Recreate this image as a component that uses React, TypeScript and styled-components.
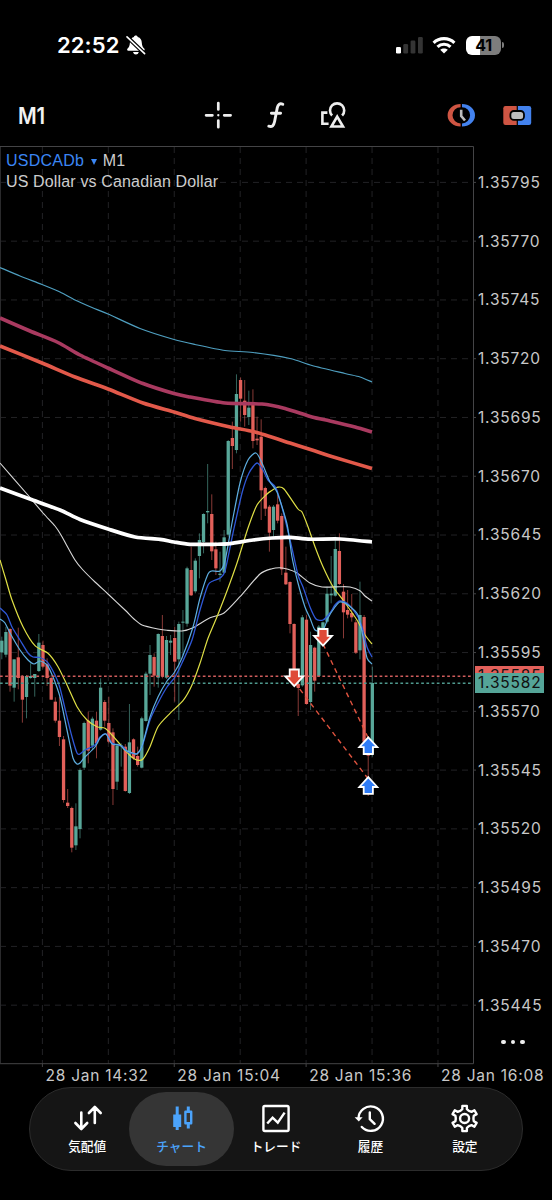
import React from "react";
import styled, { createGlobalStyle } from "styled-components";

const GlobalStyle = createGlobalStyle`
  body { margin: 0; background: #000; }
  * { box-sizing: border-box; }
`;

const sans = '"Inter", "Noto Sans CJK JP", sans-serif';

const Screen = styled.div`
  width: 552px;
  height: 1200px;
  background: #000;
  color: #fff;
  display: flex;
  flex-direction: column;
  overflow: hidden;
  font-family: ${sans};
`;

const StatusBar = styled.header`
  height: 90px;
  flex: none;
  display: flex;
  align-items: center;
  padding: 0 48px 0 57px;
`;

const Time = styled.span`
  font-size: 22px;
  font-weight: 600;
  line-height: 24px;
  width: 69px;
  letter-spacing: 0.1px;
  white-space: nowrap;
`;

const StatusIcons = styled.div`
  margin-left: auto;
  display: flex;
  align-items: center;
`;

const WifiIcon = styled.svg`
  margin-left: 9px;
`;

const Battery = styled.div`
  width: 35px;
  height: 19px;
  margin-left: 10px;
  border-radius: 6px;
  background: linear-gradient(90deg, #fff 41%, #7d7d7d 41%);
  color: #000;
  font-size: 16px;
  font-weight: 700;
  line-height: 19px;
  text-align: center;
  letter-spacing: -0.3px;
`;

const BatteryTip = styled.div`
  width: 2px;
  height: 6px;
  margin-left: 1px;
  border-radius: 0 2px 2px 0;
  background: #7d7d7d;
`;

const Toolbar = styled.nav`
  height: 56px;
  flex: none;
  display: flex;
  align-items: center;
  padding: 0 19px 6px 18px;
`;

const Timeframe = styled.span`
  font-size: 22.5px;
  font-weight: 600;
  letter-spacing: -0.2px;
  width: 184px;
  color: #f2f2f2;
  transform: scaleX(0.9);
  transform-origin: left;
`;

const ToolButton = styled.button<{ $gap?: number }>`
  width: 32px;
  height: 32px;
  padding: 0;
  border: 0;
  background: none;
  display: block;
  margin-left: ${(p) => p.$gap ?? 0}px;
  svg { display: block; }
`;

const ChartArea = styled.main`
  height: 918px;
  flex: none;
  display: flex;
  position: relative;
`;

const Plot = styled.svg`
  width: 477px;
  height: 922px;
  flex: none;
  display: block;
`;

const SymbolInfo = styled.div`
  position: absolute;
  left: 6px;
  top: 5px;
  font-family: "Liberation Sans", Arial, sans-serif;
  font-size: 16px;
  letter-spacing: 0.15px;
  line-height: 20.5px;
  color: #cdcdcd;
  white-space: nowrap;
`;

const SymbolRow = styled.div`
  display: flex;
  align-items: center;
`;

const SymbolName = styled.span`
  color: #3b86f4;
  letter-spacing: 0.25px;
`;

const Caret = styled.span`
  width: 0;
  height: 0;
  margin: 2px 6px 0 6.5px;
  border: 3.2px solid transparent;
  border-top: 6px solid #3b86f4;
  border-bottom: 0;
`;

const PriceAxis = styled.div`
  padding: 7.9px 0 0 1px;
  display: flex;
  flex-direction: column;
`;

const axisText = `
  font-family: ${sans};
  font-size: 15.5px;
  letter-spacing: 0.8px;
  white-space: nowrap;
`;

const PriceLabel = styled.span`
  ${axisText}
  height: 58.77px;
  line-height: 58.77px;
  color: #c8c8c8;
`;

const PriceTag = styled.div<{ $tone: string; $top: number }>`
  ${axisText}
  position: absolute;
  left: 475px;
  top: ${(p) => p.$top}px;
  width: 69px;
  height: 20px;
  line-height: 20px;
  padding-left: 3px;
  color: #111;
  background: ${(p) => p.$tone};
`;

const MoreDots = styled.div`
  position: absolute;
  left: 501px;
  top: 893.5px;
  display: flex;
  gap: 4.8px;
`;

const Dot = styled.i`
  width: 4.8px;
  height: 4.8px;
  border-radius: 50%;
  background: #eee;
`;

const TimeAxis = styled.div`
  height: 23px;
  flex: none;
  padding-left: 45.5px;
  display: flex;
`;

const TimeLabel = styled.span`
  ${axisText}
  letter-spacing: 0.75px;
  width: 131.87px;
  flex: none;
  line-height: 23px;
  color: #c8c8c8;
`;

const TabBar = styled.nav`
  width: 494px;
  height: 84px;
  flex: none;
  margin-left: 29px;
  padding: 4px 10px 4px 10px;
  display: flex;
  border: 1px solid #2c2c2c;
  border-radius: 42px;
  background: #151515;
`;

const Tab = styled.button<{ $active?: boolean }>`
  flex: 1 1 0;
  height: 74px;
  margin: 0 ${(p) => (p.$active ? "-5.5px" : "0")};
  ${(p) => (p.$active ? "flex: 0 0 105.5px;" : "")}
  padding: 11px 0 0;
  border: 0;
  border-radius: 37px;
  background: ${(p) => (p.$active ? "#353535" : "none")};
  color: ${(p) => (p.$active ? "#4ba3fb" : "#fff")};
  display: flex;
  flex-direction: column;
  align-items: center;
  font-family: ${sans};
  font-size: 12.7px;
  font-weight: 500;
  line-height: 18px;
  gap: 5px;
  white-space: nowrap;
  svg { display: block; flex: none; overflow: visible; }
`;

const UP = "#58a799";
const DOWN = "#e2605a";
const STEP = 4.117;
const X0 = 1.8;

type Candle = [number, number, number, number, number];

const fromBase = (base: number, rows: [number, number, number, number, number][]): Candle[] =>
  rows.map(([up, a, b, c, d]) => [up, base + a / 3, base + b / 3, base + c / 3, base + d / 3]);

/* direction, body top, body bottom, wick top, wick bottom (thirds of a pixel from a base row) */
const candles: Candle[] = [
  ...fromBase(600, [
    [1, 122, 157, 110, 178], [1, 96, 164, 80, 172], [0, 87, 257, 85, 275], [1, 178, 263, 178, 305],
    [0, 172, 234, 83, 268], [0, 228, 299, 225, 368], [1, 228, 291, 225, 355], [1, 228, 234, 190, 236],
    [1, 222, 234, 222, 290], [1, 128, 213, 102, 216], [0, 135, 200, 122, 205], [0, 193, 234, 175, 258],
    [0, 234, 299, 225, 299], [0, 305, 362, 292, 368], [0, 362, 411, 290, 438], [0, 418, 600, 408, 608],
    [0, 608, 618, 567, 624], [0, 624, 743, 620, 757], [1, 679, 736, 610, 750], [1, 510, 687, 505, 715],
    [1, 369, 503, 365, 510], [0, 362, 452, 335, 490], [1, 356, 437, 350, 450], [0, 362, 430, 335, 475],
    [1, 263, 389, 235, 392], [0, 306, 362, 300, 380], [0, 369, 425, 290, 430], [0, 397, 567, 385, 615],
    [1, 437, 545, 430, 570], [1, 436, 439, 430, 500], [0, 440, 573, 432, 575], [1, 427, 579, 312, 582],
    [0, 418, 475, 415, 480], [0, 468, 495, 440, 500],
  ]),
  ...fromBase(560, [
    [1, 475, 623, 470, 625], [1, 341, 483, 335, 485], [1, 285, 341, 255, 405], [0, 291, 347, 280, 380],
    [1, 222, 353, 220, 383], [0, 228, 349, 165, 355], [1, 240, 353, 228, 357], [1, 242, 248, 225, 285],
    [0, 234, 305, 200, 425], [1, 192, 298, 185, 480], [1, 185, 188, 150, 285],
  ]),
  ...fromBase(360, [
    [1, 625, 791, 620, 800], [0, 630, 706, 560, 708], [1, 602, 694, 595, 700], [1, 540, 588, 520, 655],
    [1, 462, 546, 460, 580], [1, 453, 457, 312, 490], [0, 462, 574, 403, 600], [0, 568, 625, 545, 645],
    [1, 641, 645, 575, 665], [1, 532, 638, 510, 640], [1, 243, 524, 240, 530], [0, 234, 258, 185, 327],
    [1, 102, 270, 43, 280], [0, 60, 116, 52, 185], [0, 122, 165, 60, 200], [1, 143, 171, 92, 195],
    [0, 135, 243, 88, 265], [0, 236, 241, 170, 255], [0, 230, 391, 178, 480], [0, 384, 446, 380, 468],
    [0, 440, 518, 435, 575], [1, 440, 510, 435, 530], [0, 433, 482, 405, 490],
  ]),
  ...fromBase(480, [
    [0, 108, 268, 100, 285], [0, 278, 313, 200, 315], [0, 306, 432, 304, 460], [0, 432, 600, 430, 618],
    [0, 612, 624, 580, 708], [1, 412, 616, 405, 620], [0, 419, 672, 405, 674], [1, 495, 666, 455, 690],
    [0, 503, 602, 500, 635], [1, 440, 588, 435, 590], [1, 427, 445, 425, 460], [1, 341, 425, 320, 430],
    [1, 341, 346, 228, 370], [1, 207, 347, 170, 350], [0, 213, 312, 160, 315], [0, 335, 397, 312, 475],
    [0, 390, 404, 330, 415], [0, 399, 412, 342, 425], [0, 427, 518, 420, 522], [1, 405, 511, 305, 538],
    [0, 411, 785, 405, 800], [0, 785, 827, 770, 948], [1, 609, 822, 560, 830],
  ]),
];

/* Cardinal spline through the listed points */
const smooth = (flat: number[]) => {
  const p: [number, number][] = [];
  for (let i = 0; i < flat.length; i += 2) p.push([flat[i], flat[i + 1]]);
  let d = `M${p[0][0]} ${p[0][1]}`;
  for (let i = 0; i < p.length - 1; i++) {
    const a = p[Math.max(0, i - 1)], b = p[i], c = p[i + 1], e = p[Math.min(p.length - 1, i + 2)];
    const k = 8;
    d += `C${b[0] + (c[0] - a[0]) / k} ${b[1] + (c[1] - a[1]) / k} ${c[0] - (e[0] - b[0]) / k} ${c[1] - (e[1] - b[1]) / k} ${c[0]} ${c[1]}`;
  }
  return d;
};

const averages: { color: string; width: number; pts: number[] }[] = [
  { color: "#d8d8d8", width: 1.1, pts: [0, 463, 27, 494, 43, 513, 55, 526, 61, 535, 75, 560, 83, 570, 95, 582, 108, 594, 125, 610, 134, 619, 142, 625, 158, 629, 167, 630.3, 182, 631, 193, 627.7, 210, 617.7, 224, 613, 240, 596.7, 260, 574, 272, 568.7, 280, 567.7, 288, 569.3, 297, 573, 310, 583, 322, 587, 340, 586.7, 350, 587, 360, 590.7, 365, 596, 372, 601] },
  { color: "#dfdf45", width: 1.2, pts: [0, 560, 6, 580, 12, 600, 23, 626.7, 35, 645.7, 48, 653.3, 58, 666.7, 67, 685, 77, 706.7, 87, 720, 97, 726.7, 105, 728.3, 112, 735, 125, 750, 132, 757.3, 138, 760.3, 143, 759, 150, 746.7, 158, 726.7, 170, 713.3, 183, 700.7, 192, 685, 200, 663.3, 208, 638.3, 217, 616.7, 227, 591, 237, 563, 248, 528, 257, 505, 267, 494, 271, 491, 278, 487.2, 284, 489, 298, 509, 302, 512, 308, 526.7, 315, 546.7, 323, 566.7, 333, 586.7, 343, 600, 357, 620, 365, 635, 372, 644] },
  { color: "#2f58d8", width: 1.3, pts: [0, 608, 7, 615, 12, 627, 20, 640, 28, 653, 33, 657, 40, 657.5, 47, 661.7, 55, 675, 60, 688, 67, 717, 72, 737, 77, 753, 80, 754, 85, 750, 95, 745, 100, 737, 106, 734, 112, 743, 122, 746, 128, 752, 137, 753.5, 142, 746.7, 150, 720, 158, 703, 167, 687, 175, 677, 182, 663, 192, 640, 200, 610, 208, 585, 213, 581, 220, 578, 225, 571, 233, 533, 242, 493, 249, 473, 257, 463, 263, 470, 268, 480, 276, 488, 283, 511, 291, 544, 298, 575, 303, 587, 310, 607, 316, 619, 323, 620, 330, 613, 335, 605, 340, 601, 348, 604, 358, 617, 362, 627, 367, 647, 372, 657] },
  { color: "#5eaee0", width: 1.2, pts: [0, 619, 5, 623, 10, 633, 20, 650, 28, 660, 34, 664, 40, 661, 47, 665, 53, 677, 60, 697, 67, 730, 73, 758, 77, 764, 80, 763, 85, 757, 95, 747, 100, 738, 106, 734, 112, 744, 120, 745, 125, 750, 133, 753, 137, 754, 142, 746, 150, 717, 158, 697, 167, 681, 174, 673, 182, 658, 193, 627, 200, 598, 208, 574, 212, 571, 220, 571, 225, 561, 232, 523, 240, 483, 248, 460, 256, 453, 262, 463, 270, 482, 277, 492, 287, 524, 292, 557, 298, 583, 305, 607, 310, 618, 315, 630, 323, 630, 328, 618, 335, 607, 340, 602, 348, 605, 358, 615, 363, 637, 367, 658, 372, 664] },
  { color: "#ffffff", width: 3.7, pts: [0, 488, 30, 499, 60, 510, 80, 519.5, 108, 529, 135, 537, 160, 539.3, 174, 542, 190, 544.3, 215, 544.3, 230, 543.7, 253, 540, 272, 538, 290, 537.4, 310, 539.2, 340, 539, 372, 542] },
  { color: "#e2594a", width: 3.6, pts: [0, 346, 42, 363, 75, 377, 108, 389, 143, 403, 174, 412, 195, 418.5, 230, 427, 255, 432, 290, 443, 312, 450, 330, 456, 372, 468.5] },
  { color: "#a93a60", width: 3.6, pts: [0, 318, 30, 331, 58, 342.5, 80, 355, 108, 368, 143, 383.5, 174, 393.5, 190, 397, 225, 403, 262, 404, 285, 408.5, 312, 417, 330, 421, 355, 427, 372, 432] },
  { color: "#4f9fc0", width: 1.2, pts: [0, 267.5, 20, 276, 42, 284.5, 60, 292, 75, 300, 92, 307.5, 108, 314, 140, 328.5, 174, 339.5, 195, 344.5, 225, 350.5, 253, 352.5, 290, 358.5, 312, 365.5, 345, 373.5, 360, 377, 372, 382] },
];

const gridX = [0, 1, 2, 3, 4, 5, 6].map((i) => 42.4 + 65.93 * i);
const gridY = Array.from({ length: 15 }, (_, i) => 182.4 + 58.77 * i);

const ARROW = "M0 -8.6 L9 1.2 H4.6 V8 H-4.6 V1.2 H-9 Z";

const Marker = ({ x, y, sell }: { x: number; y: number; sell?: boolean }) => (
  <path
    d={ARROW}
    transform={`translate(${x} ${y})${sell ? " scale(1 -1)" : ""}`}
    fill={sell ? "#df4a38" : "#2f7cf6"}
    stroke="#fff"
    strokeWidth="1.8"
  />
);

const Chart = () => (
  <Plot viewBox="0 146 477 922">
    <g stroke="#222225" strokeWidth="1" strokeDasharray="6 5">
      {gridY.map((y) => <line key={y} x1="0" x2="473" y1={y} y2={y} />)}
      {gridX.map((x) => <line key={x} x1={x} x2={x} y1="147" y2="1064" />)}
    </g>
    <path d="M0 146.5 H473.5 V1063.7 H0" fill="none" stroke="#444446" />
    <path d="M0.5 147 V1063" stroke="#2a2a2c" />
    <g stroke="#444446">
      {gridY.map((y) => <line key={y} x1="473" x2="476" y1={y} y2={y} />)}
      {[0, 2, 4, 6].map((i) => <line key={i} x1={gridX[i]} x2={gridX[i]} y1="1064" y2="1067" />)}
    </g>
    {candles.map(([up, a, b, c, d], i) => {
      const x = X0 + STEP * i;
      const color = up ? UP : DOWN;
      return (
        <g key={i}>
          <line x1={x} x2={x} y1={c} y2={d} stroke={color} strokeWidth="1" opacity="0.6" />
          <rect x={x - 1.65} y={a} width="3.3" height={b - a} fill={color} />
        </g>
      );
    })}
    {averages.map((l, i) => (
      <path key={i} d={smooth(l.pts)} fill="none" stroke={l.color} strokeWidth={l.width} />
    ))}
    <line x1="0" x2="473" y1="676.3" y2="676.3" stroke="#d05d5c" strokeWidth="1.6" strokeDasharray="2.7 2.5" />
    <line x1="0" x2="473" y1="683.2" y2="683.2" stroke="#4f998e" strokeWidth="1.6" strokeDasharray="2.7 2.5" />
    <g stroke="#e0533f" strokeWidth="1.4" strokeDasharray="5 4">
      <line x1="323" y1="644" x2="368.3" y2="738" />
      <line x1="294.3" y1="682" x2="368.3" y2="779" />
    </g>
    <Marker x={323} y={637} sell />
    <Marker x={294.3} y={677.5} sell />
    <Marker x={368.3} y={746} />
    <Marker x={368.3} y={785.8} />
  </Plot>
);

const prices = Array.from({ length: 15 }, (_, i) => (1.35795 - i * 0.00025).toFixed(5));

const gearPath = () => {
  const pts: string[] = [];
  for (let i = 0; i < 6; i++) {
    const a = i * 60 - 90;
    [[-25, 8.9], [-14, 9.6], [-10, 12.8], [10, 12.8], [14, 9.6], [25, 8.9]].forEach(([o, r]) => {
      const t = ((a + o) * Math.PI) / 180;
      pts.push(`${(14 + r * Math.cos(t)).toFixed(2)} ${(14 + r * Math.sin(t)).toFixed(2)}`);
    });
  }
  return `M${pts.join("L")}Z`;
};

const TabIcon = ({ children }: { children: React.ReactNode }) => (
  <svg width="28" height="30" viewBox="0 0 28 30" fill="none" stroke="currentColor" strokeWidth="2.4" strokeLinecap="round" strokeLinejoin="round">
    {children}
  </svg>
);

export default function App() {
  return (
    <>
      <GlobalStyle />
      <Screen>
        <StatusBar>
          <Time>22:52</Time>
          <svg width="20" height="20" viewBox="0 0 20 20">
            <path d="M9.8 0.6C10.8 0.6 11.5 1.2 11.7 2C14.6 2.8 15.7 5 15.8 7.7C15.9 10.9 17 12.3 18.4 13.8C19 14.7 18.6 15.7 17.6 15.7H2.2C1.2 15.7 0.8 14.7 1.4 13.8C2.8 12.3 3.8 10.9 3.9 7.7C4 5 5.1 2.8 7.9 2C8.1 1.2 8.8 0.6 9.8 0.6ZM7 17H12.8C12.3 18.7 11.3 19.5 9.9 19.5S7.5 18.7 7 17Z" fill="#fff" />
            <path d="M1 1.8L18.6 18.6" stroke="#000" strokeWidth="4" />
            <path d="M1 1.8L18.6 18.6" stroke="#fff" strokeWidth="1.6" strokeLinecap="round" />
          </svg>
          <StatusIcons>
            <svg width="27" height="18" viewBox="0 0 27 18">
              <rect x="0" y="11" width="5" height="6.5" rx="1.3" fill="#fff" />
              <rect x="7.3" y="8" width="4.8" height="9.5" rx="1.3" fill="#343434" />
              <rect x="14.6" y="4.5" width="4.8" height="13" rx="1.3" fill="#343434" />
              <rect x="22" y="1" width="4.8" height="16.5" rx="1.3" fill="#343434" />
            </svg>
            <WifiIcon width="24" height="18" viewBox="0 0 24 18">
              <g fill="none" stroke="#fff" strokeWidth="3.1">
                <path d="M1.6 6.8C7.3 1.2 16.7 1.2 22.4 6.8" />
                <path d="M5.5 10.9C9.1 7.4 14.9 7.4 18.5 10.9" />
              </g>
              <path d="M12 17.6L8.2 13.8C10.3 11.9 13.7 11.9 15.8 13.8Z" fill="#fff" />
            </WifiIcon>
            <Battery>41</Battery>
            <BatteryTip />
          </StatusIcons>
        </StatusBar>

        <Toolbar>
          <Timeframe>M1</Timeframe>
          <ToolButton aria-label="crosshair">
            <svg width="32" height="32" viewBox="0 0 32 32" stroke="#eee" strokeWidth="2.7" strokeLinecap="round">
              <path d="M16.3 4V10.5M16.3 21.5V28.2M4.1 16.3H10.4M22.2 16.3H28.6" />
              <path d="M16.3 16.2V16.3" strokeWidth="2.3" />
            </svg>
          </ToolButton>
          <ToolButton $gap={26} aria-label="indicators">
            <svg width="32" height="32" viewBox="0 0 32 32" fill="none" stroke="#eee" strokeWidth="2.9" strokeLinecap="round">
              <path d="M22.8 5.3C20 3.9 18 5.2 17.3 8.6L14.6 22.6C13.9 26.4 12 28.4 8.8 27.2M11.4 14.2H20.6" />
            </svg>
          </ToolButton>
          <ToolButton $gap={25} aria-label="objects">
            <svg width="32" height="32" viewBox="0 0 32 32" fill="none" stroke="#eee" strokeWidth="2.6">
              <path d="M15.1 16.5A7.1 7.1 0 1 1 25.1 16.5" />
              <path d="M20.2 17.6L26 27.5H14.4Z" />
              <path d="M10.4 13.6H5.4V24.8H11.6" />
            </svg>
          </ToolButton>
          <ToolButton $gap={96} aria-label="market">
            <svg width="32" height="32" viewBox="0 0 32 32" fill="none">
              <path d="M15.6 5A13 11.3 0 0 0 15.6 27.6V24.4A8 8 0 0 1 15.6 8.2Z" fill="#cf5543" />
              <path d="M17 5A13 11.3 0 0 1 17 27.6V24.4A8 8 0 0 0 17 8.2Z" fill="#4382ee" />
              <path d="M16.2 10.8V17L20 21.5" stroke="#bdbdbd" strokeWidth="2.6" />
            </svg>
          </ToolButton>
          <ToolButton $gap={24.5} aria-label="trade">
            <svg width="32" height="32" viewBox="0 0 32 32">
              <path d="M15.7 7V26H4.5Q2.3 26 2.3 23.8V9.2Q2.3 7 4.5 7Z" fill="#cf5543" />
              <path d="M16.9 7V26H28Q30.2 26 30.2 23.8V9.2Q30.2 7 28 7Z" fill="#4382ee" />
              <rect x="9.4" y="12" width="13.6" height="8.8" rx="3.4" fill="#bdbdbd" stroke="#000" strokeWidth="1.8" />
            </svg>
          </ToolButton>
        </Toolbar>

        <ChartArea>
          <Chart />
          <PriceAxis>
            {prices.map((p) => <PriceLabel key={p}>{p}</PriceLabel>)}
          </PriceAxis>
          <SymbolInfo>
            <SymbolRow><SymbolName>USDCADb</SymbolName><Caret />M1</SymbolRow>
            <div>US Dollar vs Canadian Dollar</div>
          </SymbolInfo>
          <PriceTag $tone="#e2605a" $top={520.3}>1.35585</PriceTag>
          <PriceTag $tone="#55a598" $top={527.3}>1.35582</PriceTag>
          <MoreDots><Dot /><Dot /><Dot /></MoreDots>
        </ChartArea>

        <TimeAxis>
          {["14:32", "15:04", "15:36", "16:08"].map((t) => <TimeLabel key={t}>28 Jan {t}</TimeLabel>)}
        </TimeAxis>

        <TabBar>
          <Tab>
            <TabIcon>
              <path d="M8.3 9.5V25.5M2.4 20L8.3 26L14.2 20M21.8 20V4.5M15.9 10L21.8 4L27.7 10" strokeWidth="2.6" />
            </TabIcon>
            気配値
          </Tab>
          <Tab $active>
            <TabIcon>
              <path d="M9.2 3.5V27" strokeWidth="3" strokeLinecap="butt" />
              <rect x="5.2" y="11.5" width="8" height="12.5" fill="currentColor" stroke="none" />
              <path d="M20.3 3.5V8M20.3 21V25.5" strokeWidth="3" strokeLinecap="butt" />
              <rect x="17.4" y="8.8" width="5.8" height="11.4" />
            </TabIcon>
            チャート
          </Tab>
          <Tab>
            <TabIcon>
              <rect x="1.4" y="3" width="25.2" height="25" rx="1.5" />
              <path d="M5.2 20.5L10.6 14.6L15.8 19.6L22.6 9.6" strokeLinecap="butt" strokeLinejoin="miter" />
            </TabIcon>
            トレード
          </Tab>
          <Tab>
            <TabIcon>
              <path d="M2.5 15.5A12.2 12.2 0 1 1 5.8 24" />
              <path d="M-1.4 14.2L6.6 14.2L2.8 18.6Z" fill="currentColor" stroke="none" />
              <path d="M13.8 9.4V16.2L18.6 20.8" />
            </TabIcon>
            履歴
          </Tab>
          <Tab>
            <TabIcon>
              <g transform="translate(-0.4 1.5)">
                <path d={gearPath()} />
                <circle cx="14" cy="14" r="4.5" />
              </g>
            </TabIcon>
            設定
          </Tab>
        </TabBar>
      </Screen>
    </>
  );
}
